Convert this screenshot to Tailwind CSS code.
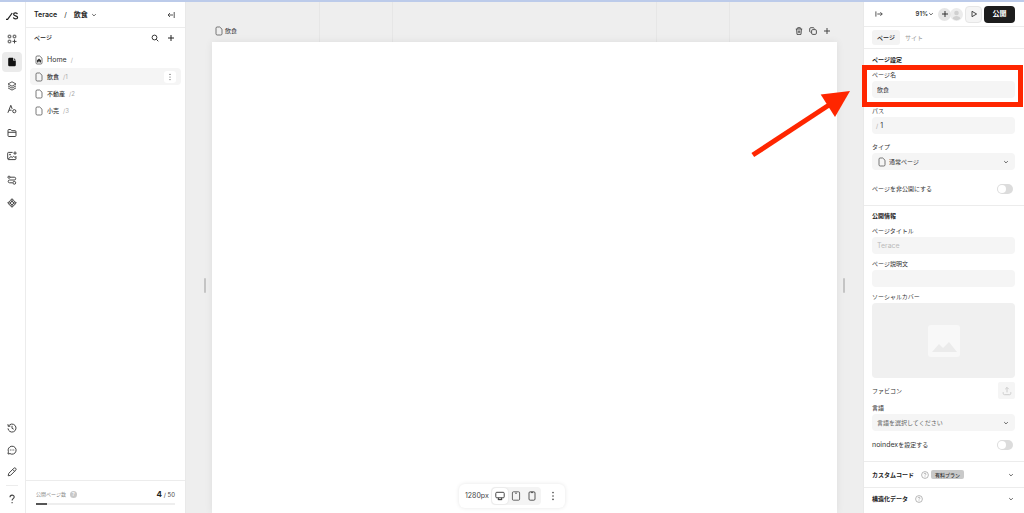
<!DOCTYPE html>
<html lang="ja">
<head>
<meta charset="utf-8">
<meta name="viewport" content="width=device-width, initial-scale=1">
<title>Terace / 飲食</title>
<script src="https://cdn.jsdelivr.net/npm/@tailwindcss/browser@4"></script>
</head>
<body class="relative flex h-screen flex-col overflow-hidden bg-white font-['Inter','Noto_Sans_CJK_JP',sans-serif] text-[6px] leading-3 text-[#333]">

<svg class="hidden" aria-hidden="true">
  <symbol id="file" viewBox="0 0 8 10"><path d="M2.2 1h2.5L7 3.2v4.6A1.2 1.2 0 0 1 5.8 9H2.2A1.2 1.2 0 0 1 1 7.8V2.2A1.2 1.2 0 0 1 2.2 1z" fill="none" stroke="#555" stroke-width=".8"/></symbol>
  <symbol id="down" viewBox="0 0 6 6"><path d="M1.2 2.1L3 3.9l1.8-1.8" fill="none" stroke="#555" stroke-width=".9"/></symbol>
  <symbol id="plus" viewBox="0 0 8 8"><path d="M4 1v6M1 4h6" fill="none" stroke="currentColor" stroke-width="1"/></symbol>
  <symbol id="help" viewBox="0 0 8 8"><circle cx="4" cy="4" r="3.4" fill="none" stroke="currentColor" stroke-width=".7"/><path d="M3 3.2c0-1.3 2-1.3 2 0 0 .7-1 .7-1 1.4M4 5.4v.7" fill="none" stroke="currentColor" stroke-width=".7"/></symbol>
  <symbol id="dots" viewBox="0 0 8 10"><g fill="currentColor"><circle cx="4" cy="1.6" r=".8"/><circle cx="4" cy="5" r=".8"/><circle cx="4" cy="8.4" r=".8"/></g></symbol>
</svg>

<div class="h-0.5 shrink-0 bg-[#bccbea]"></div>

<div class="flex min-h-0 flex-1">

  <!-- Tool rail -->
  <nav class="flex w-[26px] shrink-0 flex-col items-center border-r border-[#ececec] pr-px" aria-label="ツール">
    <a href="#" class="mt-2 flex h-3 items-center text-[#222]" aria-label="ホーム">
      <svg class="h-3 w-3.5" viewBox="0 0 14 12" fill="none" stroke="currentColor" stroke-width="1.2"><path d="M1 9.3h1.6L7.2 3"/><path d="M12.4 4.2c-.4-1.8-3.8-1.6-3.8.1 0 2 4 1 4 3.1 0 2-3.9 2-4.2 0"/></svg>
    </a>
    <div class="mt-[7px] flex h-[184px] flex-col justify-between text-[#444]">
      <button class="flex size-5 items-center justify-center" aria-label="追加"><svg class="size-2.5" viewBox="0 0 10 10" fill="none" stroke="currentColor" stroke-width="1"><rect x="1.2" y="1.2" width="2.6" height="2.6" rx=".6"/><rect x="6.2" y="1.2" width="2.6" height="2.6" rx=".6"/><rect x="1.2" y="6.2" width="2.6" height="2.6" rx=".6"/><path d="M7.5 5.4v4M5.5 7.4h4"/></svg></button>
      <button class="flex size-5 items-center justify-center rounded-[4px] bg-[#ebebeb] text-[#111]" aria-label="ページ"><svg class="h-2.5 w-2.5" viewBox="0 0 10 10"><path d="M2.4.8H6v2.6h2.8V8A1.2 1.2 0 0 1 7.6 9.2H2.4A1.2 1.2 0 0 1 1.2 8V2A1.2 1.2 0 0 1 2.4.8zM6.7.9l2 1.9h-2z" fill="currentColor"/></svg></button>
      <button class="flex size-5 items-center justify-center" aria-label="レイヤー"><svg class="size-2.5" viewBox="0 0 10 10" fill="none" stroke="currentColor" stroke-width=".9" stroke-linejoin="round"><path d="M5 .8L9 3 5 5.2 1 3zM1 4.9l4 2.2 4-2.2M1 6.9l4 2.2 4-2.2"/></svg></button>
      <button class="flex size-5 items-center justify-center" aria-label="スタイル"><svg class="size-2.5" viewBox="0 0 10 10" fill="none" stroke="currentColor" stroke-width="1"><path d="M.9 8.8L3.8 1.3l1.4 3.6M2 6.2h2.6"/><circle cx="7.3" cy="7.2" r="1.6"/></svg></button>
      <button class="flex size-5 items-center justify-center" aria-label="フォルダ"><svg class="size-2.5" viewBox="0 0 10 10" fill="none" stroke="currentColor" stroke-width="1"><path d="M1 2.4a.9.9 0 0 1 .9-.9h1.9l1 1.2h3.3a.9.9 0 0 1 .9.9v4a.9.9 0 0 1-.9.9H1.9a.9.9 0 0 1-.9-.9zM1 4.3h8"/></svg></button>
      <button class="flex size-5 items-center justify-center" aria-label="画像"><svg class="size-2.5" viewBox="0 0 10 10" fill="none" stroke="currentColor" stroke-width="1"><path d="M5.6 1.4H1.5a.8.8 0 0 0-.8.8v5.6c0 .5.4.8.8.8h6.6c.5 0 .8-.3.8-.8V5M1 8.2l3-2.7 1.2 1 1.5-1.3 2 2M8 .4v3.4M6.3 2.1h3.4"/><circle cx="3" cy="3.6" r=".5"/></svg></button>
      <button class="flex size-5 items-center justify-center" aria-label="フロー"><svg class="size-2.5" viewBox="0 0 10 10" fill="none" stroke="currentColor" stroke-width="1"><circle cx="2" cy="2.2" r="1.1"/><path d="M3.1 2.2h4.2a1.3 1.3 0 0 1 0 2.8H2.6a1.2 1.2 0 0 0 0 2.8h3"/><circle cx="7.3" cy="7.8" r="1.4"/></svg></button>
      <button class="flex size-5 items-center justify-center" aria-label="コンポーネント"><svg class="size-2.5" viewBox="0 0 10 10" fill="#999" stroke="currentColor" stroke-width="1"><path d="M5 .7l1.7 1.7L5 4.1 3.3 2.4zM5 5.9l1.7 1.7L5 9.3 3.3 7.6zM2.4 3.3L4.1 5 2.4 6.7.7 5zM7.6 3.3L9.3 5 7.6 6.7 5.9 5z"/></svg></button>
    </div>
    <div class="mt-auto flex flex-col items-center gap-0.5 pb-1 text-[#444]">
      <button class="flex size-5 items-center justify-center" aria-label="履歴"><svg class="size-2.5" viewBox="0 0 10 10" fill="none" stroke="currentColor" stroke-width="1"><path d="M1.5 3.1A4 4 0 1 1 1 5.4M.9 1.2l.4 2.2 2.1-.3M5 2.8v2.5l1.7.9"/></svg></button>
      <button class="flex size-5 items-center justify-center" aria-label="コメント"><svg class="size-2.5" viewBox="0 0 10 10" fill="none" stroke="currentColor" stroke-width="1"><path d="M1 9l.4-2.3A4 4 0 1 1 3 8.6z"/><path d="M2.9 5h.9M4.6 5h.9M6.3 5h.9"/></svg></button>
      <button class="flex size-5 items-center justify-center" aria-label="編集"><svg class="size-2.5" viewBox="0 0 10 10" fill="none" stroke="currentColor" stroke-width="1" stroke-linejoin="round"><path d="M1.2 8.8l.5-2.4L6.8 1.3a1.3 1.3 0 0 1 1.9 1.9L3.6 8.3zM5.7 2.4l1.9 1.9"/></svg></button>
      <div class="my-px h-px w-3 bg-[#ececec]"></div>
      <button class="flex size-5 items-center justify-center" aria-label="ヘルプ"><svg class="size-2.5" viewBox="0 0 10 10" fill="none" stroke="currentColor" stroke-width="1.1"><path d="M3 3.2C3 .3 7.2.5 7.2 3c0 1.7-2.1 1.7-2.1 3.5M5.1 8.1v1.2"/></svg></button>
    </div>
  </nav>

  <!-- Page list -->
  <aside class="flex w-40 shrink-0 flex-col border-r border-[#e9e9e9]">
    <header class="flex h-[26px] shrink-0 items-center border-b border-[#ececec] pr-2.5 pl-2 text-[7px] font-semibold text-[#222]">
      <span>Terace</span>
      <span class="px-[7px] font-normal">/</span>
      <button class="flex items-center gap-[3px]">飲食 <svg class="size-1.5"><use href="#down"/></svg></button>
      <button class="ml-auto text-[#444]" aria-label="パネルを閉じる"><svg class="size-2" viewBox="0 0 8 8" fill="none" stroke="currentColor" stroke-width=".9"><path d="M7.2 1v6M6 4H1M3 2L1 4l2 2"/></svg></button>
    </header>
    <div class="flex h-5 shrink-0 items-center pr-2.5 pl-2 text-[#222]">
      <h2 class="font-medium">ページ</h2>
      <button class="ml-auto" aria-label="検索"><svg class="size-2" viewBox="0 0 8 8" fill="none" stroke="currentColor" stroke-width=".9"><circle cx="3.5" cy="3.5" r="2.4"/><path d="M5.3 5.3l2 2"/></svg></button>
      <button class="ml-2" aria-label="ページを追加"><svg class="size-2"><use href="#plus"/></svg></button>
    </div>
    <ul class="mt-[3px] px-1 font-medium">
      <li class="flex h-[17px] items-center px-[5px]"><a href="#" class="flex items-center gap-1"><svg class="h-2.5 w-2" viewBox="0 0 8 10"><path d="M2.2 1h2.5L7 3.2v4.6A1.2 1.2 0 0 1 5.8 9H2.2A1.2 1.2 0 0 1 1 7.8V2.2A1.2 1.2 0 0 1 2.2 1z" fill="none" stroke="#555" stroke-width=".8"/><path d="M4 3.4l2 1.8v2.3H4.6V6.4H3.4v1.1H2V5.2z" fill="currentColor"/></svg><span class="text-[7px] font-normal">Home</span><span class="font-normal text-[#aaa]">/</span></a></li>
      <li class="flex h-[17px] items-center rounded-[4px] bg-[#f5f5f5] px-[5px]"><a href="#" class="flex items-center gap-1"><svg class="h-2.5 w-2"><use href="#file"/></svg>飲食<span class="font-normal text-[#aaa]">/1</span></a><button class="ml-auto flex h-3 w-3 items-center justify-center rounded-[3px] bg-white text-[#555]" aria-label="メニュー"><svg class="h-2 w-1.5"><use href="#dots"/></svg></button></li>
      <li class="flex h-[17px] items-center px-[5px]"><a href="#" class="flex items-center gap-1"><svg class="h-2.5 w-2"><use href="#file"/></svg>不動産<span class="font-normal text-[#aaa]">/2</span></a></li>
      <li class="flex h-[17px] items-center px-[5px]"><a href="#" class="flex items-center gap-1"><svg class="h-2.5 w-2"><use href="#file"/></svg>小売<span class="font-normal text-[#aaa]">/3</span></a></li>
    </ul>
    <footer class="mt-auto border-t border-[#ececec] px-2.5 pt-[7px] pb-2">
      <div class="flex h-3 items-center text-[#888]">
        <span class="text-[5px]">公開ページ数</span>
        <span class="ml-1 flex size-[7px] items-center justify-center rounded-full bg-[#c8c8c8] text-[5px] leading-[7px] font-semibold text-white">?</span>
        <span class="ml-auto text-[#444]"><b class="text-[8px] text-[#222]">4</b> / 50</span>
      </div>
      <div class="mt-[3px] h-0.5 bg-[#eeeeee]"><div class="h-full bg-[#555]" style="width:8%"></div></div>
    </footer>
  </aside>

  <!-- Canvas -->
  <main class="relative flex min-w-0 flex-1 flex-col bg-[#eeeeee] px-[26px]">
    <div class="absolute inset-x-0 top-0 h-10">
      <div class="absolute inset-y-0 border-l border-[#e6e6e6]" style="left:19.6%"></div>
      <div class="absolute inset-y-0 border-l border-[#e6e6e6]" style="left:30.4%"></div>
      <div class="absolute inset-y-0 border-l border-[#e6e6e6]" style="left:69.4%"></div>
      <div class="absolute inset-y-0 border-l border-[#e6e6e6]" style="left:80.2%"></div>
    </div>
    <div class="relative flex h-10 shrink-0 items-center pt-[18px] pr-1.5 pl-[3px] text-[#333]">
      <span class="flex items-center gap-0.5"><svg class="h-2.5 w-2"><use href="#file"/></svg>飲食</span>
      <div class="ml-auto flex items-center gap-1.5 text-[#444]">
        <button aria-label="削除"><svg class="size-2" viewBox="0 0 8 8" fill="none" stroke="currentColor" stroke-width=".9"><path d="M.8 2h6.4M2.7 1.8V.7h2.6v1.1M1.6 2l.4 5.4h4L6.4 2M3.3 3.5v2.4M4.7 3.5v2.4"/></svg></button>
        <button aria-label="複製"><svg class="size-2" viewBox="0 0 8 8" fill="none" stroke="currentColor" stroke-width=".9"><rect x="2.6" y="2.6" width="4.8" height="4.8" rx="1.2"/><path d="M1.6 5.3A1 1 0 0 1 .7 4.3V1.8A1.1 1.1 0 0 1 1.8.7h2.5a1 1 0 0 1 1 .9"/></svg></button>
        <button aria-label="追加"><svg class="size-2"><use href="#plus"/></svg></button>
      </div>
    </div>
    <div class="relative flex-1 bg-white shadow-[0_0_8px_rgba(0,0,0,0.07)]">
      <div class="absolute top-[236px] -left-2 h-[15px] w-0.5 rounded bg-[#c4c4c4]"></div>
      <div class="absolute top-[236px] -right-2 h-[15px] w-0.5 rounded bg-[#c4c4c4]"></div>
    </div>
  </main>

  <!-- Inspector -->
  <aside class="w-[161px] shrink-0 overflow-hidden border-l border-[#e9e9e9]">
    <header class="flex h-[25px] items-center border-b border-[#ececec] pr-[9px] pl-[11px]">
      <button class="text-[#444]" aria-label="パネルを閉じる"><svg class="size-2" viewBox="0 0 8 8" fill="none" stroke="currentColor" stroke-width=".9"><path d="M.9 1.4v5.2M2.3 4h5M5.4 2.2L7.2 4 5.4 5.8"/></svg></button>
      <button class="ml-auto flex items-center font-semibold text-[#333]">91%<svg class="size-1.5"><use href="#down"/></svg></button>
      <div class="ml-1 flex">
        <button class="z-10 flex size-[13px] items-center justify-center rounded-full bg-[#e6e6e6] text-[#333]" aria-label="招待"><svg class="size-2"><use href="#plus"/></svg></button>
        <span class="-ml-px size-[13px] rounded-full bg-[#ececec]"><svg viewBox="0 0 13 13" fill="#d0d0d0"><circle cx="6.5" cy="5" r="2.3"/><path d="M2.5 10.6c.8-3.4 7.2-3.4 8 0a6 6 0 0 1-8 0z"/></svg></span>
      </div>
      <button class="ml-0.5 flex size-[17px] items-center justify-center rounded-[4px] border border-[#e6e6e6] bg-[#f5f5f5] text-[#333]" aria-label="プレビュー"><svg class="size-2" viewBox="0 0 8 8" fill="none" stroke="currentColor" stroke-width=".9" stroke-linejoin="round"><path d="M2 1.3L6.6 4 2 6.7z"/></svg></button>
      <button class="ml-0.5 h-[17px] w-[31px] rounded-[4px] bg-[#1c1c1c] text-[7px] font-semibold text-white">公開</button>
    </header>
    <div class="flex h-[22px] items-center border-b border-[#ececec] pl-2" role="tablist">
      <button role="tab" aria-selected="true" class="h-[15px] w-7 rounded-[3px] bg-[#f3f3f3] font-medium text-[#222]">ページ</button>
      <button role="tab" aria-selected="false" class="h-[15px] w-7 text-[#999]">サイト</button>
    </div>

    <section class="border-b border-[#ececec] pt-[5px] pr-[9px] pb-1.5 pl-2">
      <h3 class="mb-[3px] h-3 font-bold text-[#222]">ページ設定</h3>
      <div class="flex flex-col gap-[7px]">
        <div>
          <label for="name" class="block h-3">ページ名</label>
          <input id="name" value="飲食" class="block h-[17px] w-full rounded-[4px] bg-[#f5f5f5] px-[5px]">
        </div>
        <div>
          <label for="path" class="block h-3">パス</label>
          <div class="flex h-[17px] items-center rounded-[4px] bg-[#f5f5f5] px-1"><span class="text-[#aaa]">/</span><input id="path" value="1" class="ml-0.5 w-full text-[7px]"></div>
        </div>
        <div>
          <label for="type" class="block h-3">タイプ</label>
          <div class="relative">
            <svg class="absolute top-1 left-1.5 h-2.5 w-2"><use href="#file"/></svg>
            <select id="type" class="block h-[17px] w-full appearance-none rounded-[4px] bg-[#f5f5f5] pl-[17px]"><option>通常ページ</option></select>
            <svg class="absolute top-1.5 right-1.5 size-1.5"><use href="#down"/></svg>
          </div>
        </div>
      </div>
      <div class="mt-[9px] flex h-5 items-center justify-between pr-0.5">
        <label for="private">ページを非公開にする</label>
        <input id="private" type="checkbox" role="switch" class="relative h-2.5 w-4 appearance-none rounded-full bg-[#dcdcdc] before:absolute before:top-px before:left-px before:size-2 before:rounded-full before:bg-white">
      </div>
    </section>

    <section class="border-b border-[#ececec] pt-1 pr-[9px] pb-1.5 pl-2">
      <h3 class="mb-[3px] h-3 font-bold text-[#222]">公開情報</h3>
      <div class="flex flex-col gap-1">
        <div>
          <label for="title" class="block h-3">ページタイトル</label>
          <input id="title" placeholder="Terace" class="block h-[17px] w-full rounded-[4px] bg-[#f5f5f5] px-[5px] text-[7px] placeholder:text-[#bbb]">
        </div>
        <div>
          <label for="desc" class="block h-3">ページ説明文</label>
          <input id="desc" class="block h-[17px] w-full rounded-[4px] bg-[#f5f5f5] px-[5px]">
        </div>
        <div>
          <div class="h-3">ソーシャルカバー</div>
          <button class="flex h-[75px] w-full items-center justify-center rounded-[4px] bg-[#f0f0f0]" aria-label="ソーシャルカバー"><svg class="size-8" viewBox="0 0 32 32"><rect width="32" height="32" rx="3" fill="#f8f8f8"/><path d="M4 27l7-8 4 4 6-6 8 10z" fill="#ebebeb"/></svg></button>
        </div>
        <div class="flex h-[17px] items-center justify-between">
          <span>ファビコン</span>
          <button class="flex size-[17px] items-center justify-center rounded-[2px] bg-[#f5f5f5] text-[#c8c8c8]" aria-label="アップロード"><svg class="size-2.5" viewBox="0 0 10 10" fill="none" stroke="currentColor" stroke-width=".9"><path d="M5 6.4V1.5M3.2 3.2L5 1.4l1.8 1.8M1.2 6.2v1.2c0 .8.5 1.3 1.3 1.3h5c.8 0 1.3-.5 1.3-1.3V6.2"/></svg></button>
        </div>
      </div>
      <label for="lang" class="mt-[3px] block h-3">言語</label>
      <div class="relative">
        <select id="lang" class="block h-[17px] w-full appearance-none rounded-[4px] bg-[#f5f5f5] pl-[5px] text-[#666]"><option>言語を選択してください</option></select>
        <svg class="absolute top-1.5 right-1.5 size-1.5"><use href="#down"/></svg>
      </div>
      <div class="mt-1 flex h-5 items-center justify-between pr-0.5">
        <label for="noindex"><span class="text-[7px]">noindex</span>を設定する</label>
        <input id="noindex" type="checkbox" role="switch" class="relative h-2.5 w-4 appearance-none rounded-full bg-[#dcdcdc] before:absolute before:top-px before:left-px before:size-2 before:rounded-full before:bg-white">
      </div>
    </section>

    <button class="flex h-[26px] w-full items-center border-b border-[#ececec] pr-2.5 pl-2 font-bold text-[#222]">カスタムコード<svg class="ml-[7px] size-2 text-[#999]"><use href="#help"/></svg><span class="ml-0.5 flex h-[9px] w-[33px] items-center justify-center rounded-[2px] bg-[#c9c9c9] text-[5px] font-medium text-[#333]">有料プラン</span><svg class="ml-auto size-1.5"><use href="#down"/></svg></button>
    <button class="flex h-[22px] w-full items-center pr-2.5 pl-2 font-bold text-[#222]">構造化データ<svg class="ml-[7px] size-2 text-[#999]"><use href="#help"/></svg><svg class="ml-auto size-1.5"><use href="#down"/></svg></button>
  </aside>
</div>

<!-- Viewport switcher -->
<div class="absolute bottom-[5px] left-1/2 flex h-6 w-[106px] -translate-x-1/2 items-center rounded-md bg-white pr-2 pl-1.5 text-[#444] shadow-[0_0_4px_rgba(0,0,0,0.1)]">
  <span class="text-[7px]">1280px</span>
  <div class="ml-auto flex h-[18px] items-center rounded-[4px] bg-[#f4f4f4] px-px">
    <button class="flex size-4 items-center justify-center rounded-[4px] bg-white shadow-[0_0_2px_rgba(0,0,0,0.12)]" aria-label="デスクトップ"><svg class="size-2.5" viewBox="0 0 10 10" fill="none" stroke="currentColor" stroke-width="1"><rect x=".8" y="1.3" width="8.4" height="5.5" rx="1"/><path d="M3.4 6.8v1.8h3.2V6.8M2.8 8.6h4.4"/></svg></button>
    <button class="flex size-4 items-center justify-center" aria-label="タブレット"><svg class="size-2.5" viewBox="0 0 10 10" fill="none" stroke="currentColor" stroke-width=".8"><rect x="1.4" y=".8" width="7.2" height="8.4" rx="1"/><path d="M4 2.2h2"/></svg></button>
    <button class="flex size-4 items-center justify-center" aria-label="スマートフォン"><svg class="size-2.5" viewBox="0 0 10 10" fill="none" stroke="currentColor" stroke-width=".9"><rect x="2" y=".8" width="6" height="8.4" rx="1.2"/><path d="M3.8 1.6h2.4"/></svg></button>
  </div>
  <button class="ml-2" aria-label="その他"><svg class="h-2.5 w-2"><use href="#dots"/></svg></button>
</div>

<!-- Callout: box and arrow on the page name field -->
<div class="pointer-events-none absolute top-[65px] right-px h-[42px] w-[161px] border-5 border-[#ff2600]"></div>
<svg class="pointer-events-none absolute top-[88px] right-[172px] h-[72px] w-[104px]" viewBox="748 88 104 72" fill="#ff2600" aria-hidden="true"><path d="M752.8 155L829 105" stroke="#ff2600" stroke-width="5"/><path d="M850 91l-29.3 3.5L835 117z"/></svg>

</body>
</html>
